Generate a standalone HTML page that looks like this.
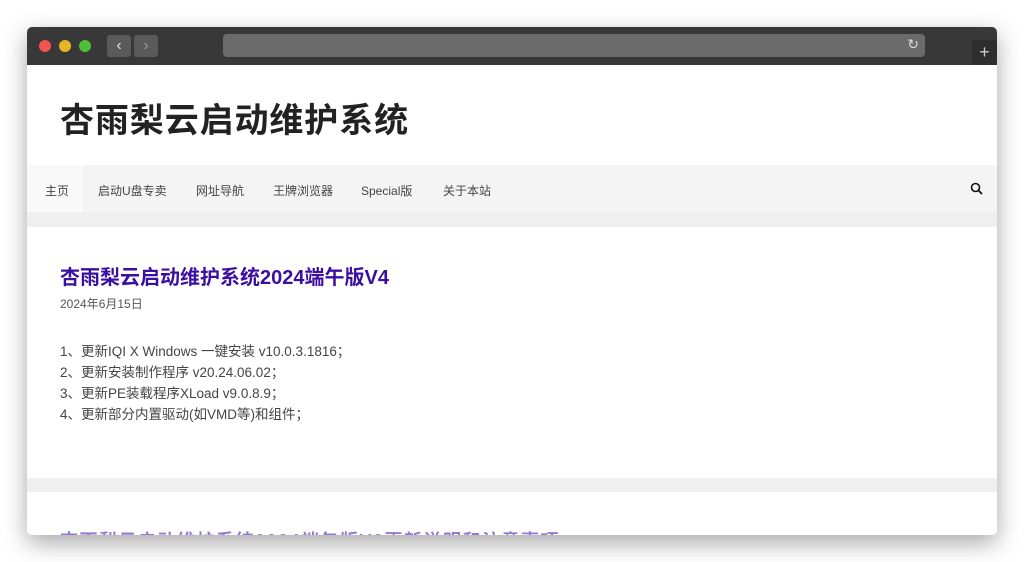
<!DOCTYPE html><html><head><meta charset="utf-8"><style>
body{margin:0;width:1024px;height:562px;background:#fff;position:relative;overflow:hidden;font-family:"Liberation Sans","Noto Sans CJK SC",sans-serif}
.win{position:absolute;left:27px;top:27px;width:970px;height:508px;background:#fff;box-shadow:0 8px 24px rgba(0,0,0,.35);border-radius:5px;overflow:hidden}
.tb{position:absolute;left:0;top:0;width:970px;height:38px;background:#383838}
.d{position:absolute;top:13px;width:12px;height:12px;border-radius:50%}
.nb{position:absolute;top:8px;width:24px;height:22px;background:#5a5a5a;border-radius:3px;color:#ddd;font-size:16px;text-align:center;line-height:21px}
.url{position:absolute;left:196px;top:7px;width:702px;height:23px;background:#6b6b6b;border-radius:4px}
.abs{position:absolute}
.nav span{position:absolute;top:0;white-space:nowrap}
</style></head><body>
<div class="win">
<div class="tb">
<div class="d" style="left:12px;background:#f25450"></div>
<div class="d" style="left:32px;background:#e6b526"></div>
<div class="d" style="left:52px;background:#4fbf3a"></div>
<div class="nb" style="left:80px">‹</div><div class="nb" style="left:107px;color:#999">›</div>
<div class="url"><span style="position:absolute;right:6px;top:2px;color:#ddd;font-size:14px">↻</span></div>
<div class="abs" style="left:945px;top:13px;width:25px;height:25px;background:#2e2e2e;color:#ccc;font-size:18px;text-align:center;line-height:24px">+</div>
</div>
<div class="abs" style="left:33px;top:66px;font-size:34px;font-weight:bold;color:#222;letter-spacing:0.9px">杏雨梨云启动维护系统</div>
<div class="abs" style="left:0;top:138px;width:970px;height:47px;background:#f4f4f4"></div>
<div class="abs" style="left:0;top:138px;width:56px;height:47px;background:#f9f9f9"></div>
<div class="abs nav" style="left:0;top:155px;font-size:12px;color:#444">
<span style="left:18px">主页</span><span style="left:71px">启动U盘专卖</span><span style="left:169px">网址导航</span><span style="left:246px">王牌浏览器</span><span style="left:334px">Special版</span><span style="left:416px">关于本站</span></div>
<svg class="abs" style="left:943px;top:155px" width="14" height="14" viewBox="0 0 14 14"><circle cx="5.5" cy="5.5" r="4" stroke="#111" stroke-width="1.6" fill="none"/><path d="M8.5 8.5L12 12" stroke="#111" stroke-width="1.8"/></svg>
<div class="abs" style="left:0;top:185px;width:970px;height:15px;background:#efefef"></div>
<div class="abs" style="left:33px;top:234px;font-size:20px;font-weight:bold;color:#3b0fa0">杏雨梨云启动维护系统2024端午版V4</div>
<div class="abs" style="left:33px;top:268px;font-size:12px;color:#555">2024年6月15日</div>
<div class="abs" style="left:33px;top:314px;font-size:13.5px;line-height:21px;color:#444">1、更新IQI X Windows 一键安装 v10.0.3.1816；<br>2、更新安装制作程序 v20.24.06.02；<br>3、更新PE装载程序XLoad v9.0.8.9；<br>4、更新部分内置驱动(如VMD等)和组件；</div>
<div class="abs" style="left:0;top:451px;width:970px;height:14px;background:#efefef"></div>
<div class="abs" style="left:33px;top:500px;font-size:18px;font-weight:bold;color:#6a3fc0;opacity:.7;white-space:nowrap;letter-spacing:1.5px">杏雨梨云启动维护系统2024端午版V3更新说明和注意事项</div>
</div>
</body></html>
